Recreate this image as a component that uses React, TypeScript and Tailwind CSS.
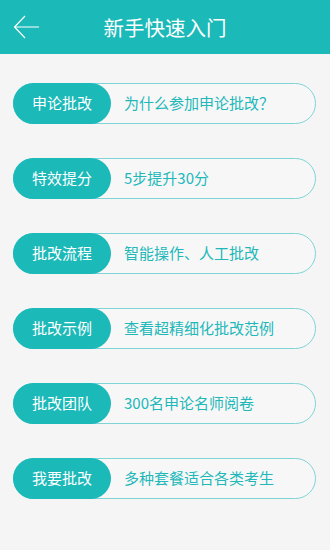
const items = [
  { tag: '申论批改', desc: '为什么参加申论批改？' },
  { tag: '特效提分', desc: '5步提升30分' },
  { tag: '批改流程', desc: '智能操作、人工批改' },
  { tag: '批改示例', desc: '查看超精细化批改范例' },
  { tag: '批改团队', desc: '300名申论名师阅卷' },
  { tag: '我要批改', desc: '多种套餐适合各类考生' },
]

export default function App() {
  return (
    <div
      className="w-[330px] h-[550px] bg-[#f5f5f5] overflow-hidden"
      style={{ fontFamily: '"Noto Sans CJK SC", "Noto Sans", sans-serif' }}
    >
      <header className="relative h-[54px] bg-[#1cb9b9] flex items-center justify-center">
        <button className="absolute left-[13px] top-[15px] text-white" title="返回">
          <svg width="26" height="24" viewBox="0 0 26 24" fill="none" stroke="currentColor" strokeWidth="1.2">
            <path d="M12 1L1.5 12 12 23M1.5 12h24.5" />
          </svg>
        </button>
        <h1 className="text-white text-[20.5px] leading-none">新手快速入门</h1>
      </header>

      <div className="flex flex-col gap-[34px] pt-[29px] px-[13px] pr-[14px]">
        {items.map(it => (
          <div
            key={it.tag}
            className="h-[41px] flex items-center rounded-full border border-[#7fd4d6] bg-[#f7f7f7]"
          >
            <div className="h-[41px] -ml-px w-[98px] rounded-full bg-[#1cb9b9] text-white text-[15px] flex items-center justify-center">
              {it.tag}
            </div>
            <span className="ml-[13px] text-[15px] text-[#22b8ba]">{it.desc}</span>
          </div>
        ))}
      </div>
    </div>
  )
}
